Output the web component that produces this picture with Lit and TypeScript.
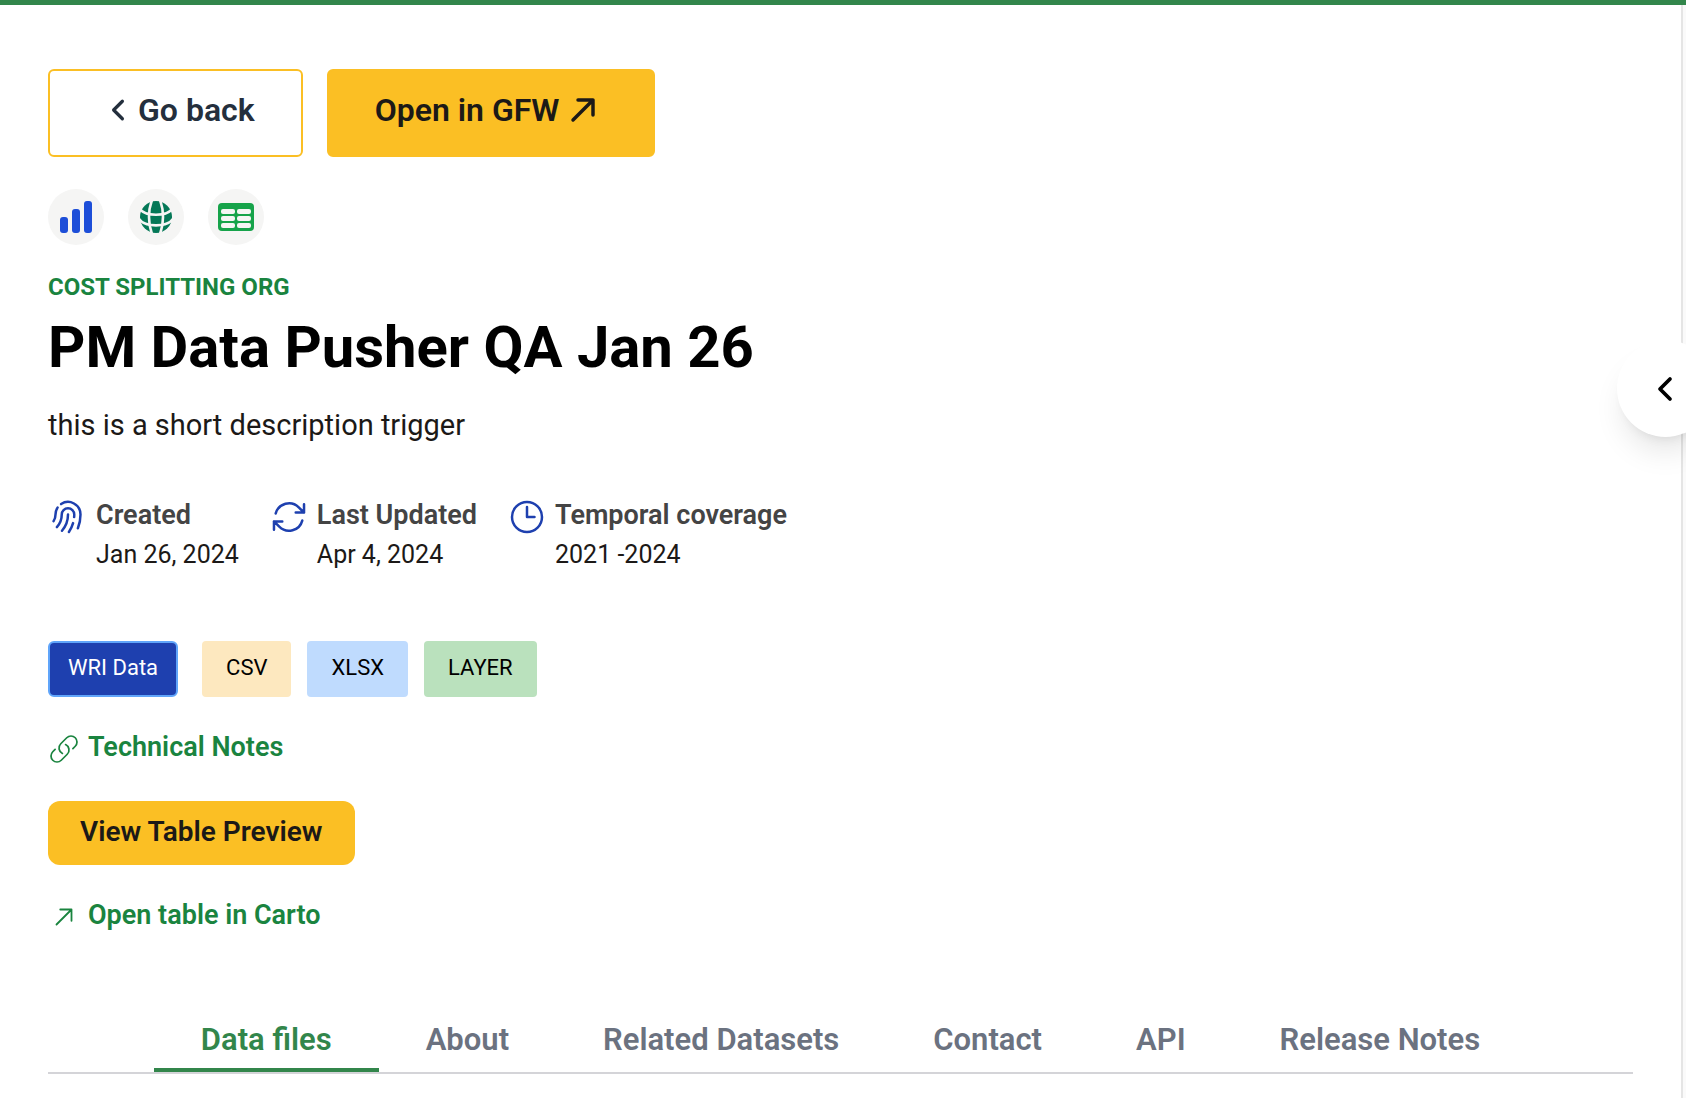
import { LitElement, html, css, svg } from "lit";
import { customElement, state } from "lit/decorators.js";

const FINGERPRINT =
  "M7.864 4.243A7.5 7.5 0 0 1 19.5 10.5c0 2.92-.556 5.709-1.568 8.268M5.742 6.364A7.465 7.465 0 0 0 4.5 10.5a7.464 7.464 0 0 1-1.15 3.993m1.989 3.559A11.209 11.209 0 0 0 8.25 10.5a3.75 3.75 0 1 1 7.5 0c0 .527-.021 1.049-.064 1.565M12 10.5a14.94 14.94 0 0 1-3.6 9.75m6.633-4.596a18.666 18.666 0 0 1-2.485 5.33";
const REFRESH =
  "M16.023 9.348h4.992v-.001M2.985 19.644v-4.992m0 0h4.992m-4.993 0 3.181 3.183a8.25 8.25 0 0 0 13.803-3.7M4.031 9.865a8.25 8.25 0 0 1 13.803-3.7l3.181 3.182m0-4.991v4.99";
const CLOCK = "M12 6v6h4.5m4.5 0a9 9 0 1 1-18 0 9 9 0 0 1 18 0Z";
const LINK =
  "M13.19 8.688a4.5 4.5 0 0 1 1.242 7.244l-4.5 4.5a4.5 4.5 0 0 1-6.364-6.364l1.757-1.757m13.35-.622 1.757-1.757a4.5 4.5 0 0 0-6.364-6.364l-4.5 4.5a4.5 4.5 0 0 0 1.242 7.244";
const ARROW_UP_RIGHT = "m4.5 19.5 15-15m0 0H8.25m11.25 0v11.25";
const CHEVRON_LEFT = "M15.75 19.5 8.25 12l7.5-7.5";

const icon = (path: string, size: number, stroke: number) => html`
  <svg class="icon" width=${size} height=${size} viewBox="0 0 24 24" aria-hidden="true">
    ${svg`<path d=${path} fill="none" stroke="currentColor" stroke-width=${stroke} stroke-linecap="round" stroke-linejoin="round"></path>`}
  </svg>
`;

const META = [
  { icon: FINGERPRINT, label: "Created", value: "Jan 26, 2024" },
  { icon: REFRESH, label: "Last Updated", value: "Apr 4, 2024" },
  { icon: CLOCK, label: "Temporal coverage", value: "2021 -2024" },
];

const FORMATS = [
  { name: "CSV", tone: "sand" },
  { name: "XLSX", tone: "sky" },
  { name: "LAYER", tone: "mint" },
];

const TABS = ["Data files", "About", "Related Datasets", "Contact", "API", "Release Notes"];

@customElement("app-root")
export class AppRoot extends LitElement {
  @state() private active = 0;

  static styles = css`
    :host {
      display: block;
      position: relative;
      overflow: hidden;
      min-height: 100vh;
      box-sizing: border-box;
      padding-right: 3px;
      border-top: 5px solid #32864b;
      background: #fafafa;
      color: #1c1917;
      font-family: Roboto, "Liberation Sans", sans-serif;
    }
    * {
      box-sizing: border-box;
    }
    button {
      font: inherit;
      color: inherit;
      cursor: pointer;
    }
    a {
      text-decoration: none;
    }
    .icon {
      display: block;
      flex: none;
    }
    .panel {
      display: flex;
      flex-direction: column;
      min-height: calc(100vh - 5px);
      padding: 64px 48px 22px;
      border-right: 2px solid #e5e5e5;
      background: #fff;
    }
    .actions {
      display: flex;
      gap: 24px;
    }
    .action {
      display: flex;
      align-items: center;
      gap: 8px;
      height: 88px;
      padding: 0 46px 6px;
      border: 2px solid #fbbf24;
      border-radius: 6px;
      font-size: 32px;
      font-weight: 600;
      line-height: 40px;
    }
    .back {
      gap: 6px;
      padding-left: 54px;
      background: #fff;
      color: #242f3d;
    }
    .open {
      padding-right: 54px;
      background: #fbbf24;
    }
    .kinds {
      display: flex;
      gap: 24px;
      margin: 32px 0 0;
      padding: 0;
      list-style: none;
    }
    .kind {
      display: grid;
      place-items: center;
      width: 56px;
      height: 56px;
      border-radius: 50%;
      background: #f5f5f4;
    }
    .org {
      margin: 24px 0 0;
      color: #1a843f;
      font-size: 24px;
      font-weight: 700;
      line-height: 36px;
    }
    .title {
      margin: 10px 0 0;
      color: #000;
      font-size: 58px;
      font-weight: 700;
      line-height: 64px;
    }
    .summary {
      margin: 22px 0 0;
      font-size: 29px;
      line-height: 48px;
    }
    .meta {
      display: flex;
      gap: 30px;
      margin: 46px 0 0;
    }
    .fact {
      display: grid;
      grid-template-columns: 40px auto;
      grid-template-rows: 40px 40px;
      column-gap: 8px;
      font-size: 27px;
      line-height: 40px;
    }
    .fact .icon {
      grid-row: 1 / 3;
      margin-top: 2px;
      color: #1e40af;
    }
    .label {
      color: #444;
      font-weight: 600;
    }
    .value {
      grid-column: 2;
      margin: 0;
      font-size: 25px;
    }
    .tags {
      display: flex;
      gap: 16px;
      margin-top: 66px;
    }
    .tag {
      height: 56px;
      padding: 0 24px;
      border-radius: 4px;
      color: #000;
      font-size: 22px;
      line-height: 54px;
    }
    .wri {
      margin-right: 8px;
      padding: 0 18px;
      border: 2px solid #60a5fa;
      border-radius: 6px;
      background: #1e40af;
      color: #fff;
      line-height: 50px;
    }
    .sand {
      background: #fde8bf;
    }
    .sky {
      background: #bfdbfe;
    }
    .mint {
      background: #bae1bd;
    }
    .links {
      display: flex;
      flex-direction: column;
      align-items: flex-start;
      gap: 32px;
      margin-top: 32px;
      font-size: 27px;
      font-weight: 600;
    }
    .link {
      display: grid;
      grid-template: 40px / 32px auto;
      align-items: start;
      justify-items: center;
      column-gap: 8px;
      color: #1a843f;
      line-height: 36px;
    }
    .link .icon {
      align-self: center;
    }
    .preview {
      height: 64px;
      padding: 0 32px 4px;
      border: 0;
      border-radius: 12px;
      background: #fbbf24;
      font-size: 28px;
    }
    .tabs {
      display: flex;
      justify-content: center;
      margin-top: 82px;
      border-bottom: 2px solid #d4d4d8;
    }
    .tab {
      height: 53px;
      padding: 0 47px 8px;
      border: 0;
      border-bottom: 4px solid transparent;
      background: none;
      color: #6b7280;
      font-size: 31px;
      font-weight: 600;
      line-height: 40px;
      white-space: nowrap;
    }
    .tab[aria-selected="true"] {
      border-color: #32864b;
      color: #32864b;
    }
    .drawer {
      position: absolute;
      top: 335px;
      right: -28px;
      display: flex;
      align-items: center;
      width: 97px;
      height: 97px;
      padding: 0 0 0 32px;
      border: 0;
      border-radius: 50%;
      background: #fff;
      color: #000;
      box-shadow: 0 20px 30px -6px rgb(0 0 0 / 10%), 0 8px 12px -8px rgb(0 0 0 / 10%);
    }
  `;

  private kinds() {
    return html`
      <ul class="kinds">
        <li class="kind">
          <svg class="icon" width="32" height="32" viewBox="0 0 32 32" fill="#1d4ed8" role="img" aria-label="Chart">
            <rect x="0" y="16" width="8" height="16" rx="3"></rect>
            <rect x="12" y="8" width="8" height="24" rx="3"></rect>
            <rect x="24" y="0" width="8" height="32" rx="3"></rect>
          </svg>
        </li>
        <li class="kind">
          <svg class="icon" width="32" height="32" viewBox="0 0 32 32" role="img" aria-label="Map">
            <circle cx="16" cy="16" r="16" fill="#047857"></circle>
            <g fill="none" stroke="#f5f5f4" stroke-width="2.6">
              <path d="M12-1C8 9 8 23 12 33M20-1C24 9 24 23 20 33"></path>
              <path d="M-1 7C5 16 27 16 33 7M-1 18C5 26.500 27 26.500 33 18"></path>
            </g>
          </svg>
        </li>
        <li class="kind">
          <svg class="icon" width="36" height="28" viewBox="0 0 36 28" role="img" aria-label="Table">
            <rect width="36" height="28" rx="4" fill="#16a34a"></rect>
            <g fill="#f5f5f4">
              <rect x="3" y="6" width="14" height="5" rx="2"></rect>
              <rect x="19" y="6" width="14" height="5" rx="2"></rect>
              <rect x="3" y="13" width="14" height="5" rx="2"></rect>
              <rect x="19" y="13" width="14" height="5" rx="2"></rect>
              <rect x="3" y="20" width="14" height="5" rx="2"></rect>
              <rect x="19" y="20" width="14" height="5" rx="2"></rect>
            </g>
          </svg>
        </li>
      </ul>
    `;
  }

  render() {
    return html`
      <main class="panel">
        <div class="actions">
          <button class="action back">${icon(CHEVRON_LEFT, 28, 2.8)}Go back</button>
          <button class="action open">Open in GFW${icon(ARROW_UP_RIGHT, 32, 2.6)}</button>
        </div>
        ${this.kinds()}
        <p class="org">COST SPLITTING ORG</p>
        <h1 class="title">PM Data Pusher QA Jan 26</h1>
        <p class="summary">this is a short description trigger</p>
        <dl class="meta">
          ${META.map(
            (m) => html`
              <div class="fact">
                ${icon(m.icon, 40, 1.5)}
                <dt class="label">${m.label}</dt>
                <dd class="value">${m.value}</dd>
              </div>
            `
          )}
        </dl>
        <div class="tags">
          <span class="tag wri">WRI Data</span>
          ${FORMATS.map((f) => html`<span class="tag ${f.tone}">${f.name}</span>`)}
        </div>
        <div class="links">
          <a class="link" href="#technical-notes">${icon(LINK, 32, 1.3)}Technical Notes</a>
          <button class="preview">View Table Preview</button>
          <a class="link" href="#carto">${icon(ARROW_UP_RIGHT, 24, 1.8)}Open table in Carto</a>
        </div>
        <div class="tabs" role="tablist">
          ${TABS.map(
            (name, i) => html`
              <button class="tab" role="tab" aria-selected=${i === this.active} @click=${() => (this.active = i)}>
                ${name}
              </button>
            `
          )}
        </div>
      </main>
      <button class="drawer" aria-label="Open side panel">${icon(CHEVRON_LEFT, 32, 2.8)}</button>
    `;
  }
}
